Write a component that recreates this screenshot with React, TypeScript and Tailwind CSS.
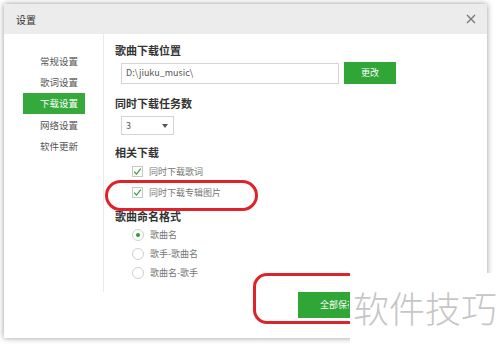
import React from "react";

const F = { fontFamily: '"Noto Sans CJK SC", "Noto Sans", sans-serif' };

function Check({ label }: { label: string }) {
  return (
    <div className="flex items-center h-[21px] pl-[17px]">
      <div className="w-[11px] h-[11px] border border-[#c8c8c8] bg-white flex items-center justify-center">
        <svg width="9" height="9" viewBox="0 0 9 9">
          <path d="M1.2 4.6 L3.5 7 L7.8 1.6" fill="none" stroke="#3a9e3f" strokeWidth="1.2" />
        </svg>
      </div>
      <span className="ml-[6px] text-[9px] text-[#777]">{label}</span>
    </div>
  );
}

function Radio({ label, on }: { label: string; on?: boolean }) {
  return (
    <div className="flex items-center h-[19px] pl-[17px]">
      <div className="w-[12px] h-[12px] rounded-full border border-[#d0d0d0] bg-white flex items-center justify-center">
        {on && <div className="w-[4px] h-[4px] rounded-full bg-[#2f9c35]" />}
      </div>
      <span className="ml-[6px] text-[9px] text-[#777]">{label}</span>
    </div>
  );
}

export default function App() {
  const menu = ["常规设置", "歌词设置", "下载设置", "网络设置", "软件更新"];
  return (
    <div className="relative w-[500px] h-[348px] bg-white overflow-hidden" style={F}>
      <div className="absolute left-[4px] top-[4px] w-[483px] h-[334px] bg-white shadow-[0_0_6px_rgba(0,0,0,0.4)] flex flex-col">
        <div className="h-[30px] bg-[#ececec] flex items-center justify-between pl-[12px] pr-[11px]">
          <span className="text-[10px] text-[#333]">设置</span>
          <svg width="10" height="10" viewBox="0 0 10 10">
            <path d="M1 1 L9 9 M9 1 L1 9" stroke="#777" strokeWidth="1.3" />
          </svg>
        </div>
        <div className="flex h-[258px]">
          <div className="w-[100px] border-r border-[#eaeaea] pt-[17px] flex flex-col">
            {menu.map((m, i) => (
              <div
                key={m}
                className={
                  "ml-[19px] w-[62px] h-[21px] flex items-center pl-[17px] text-[9.5px] " +
                  (i === 2 ? "bg-[#36a93c] text-white" : "text-[#555]") +
                  (i === 3 ? " mt-[1px]" : "")
                }
              >
                {m}
              </div>
            ))}
          </div>
          <div className="flex-1 pl-[11px] pt-[8px] flex flex-col">
            <div className="h-[16px] flex items-center text-[11px] font-bold text-[#333]">歌曲下载位置</div>
            <div className="flex items-center h-[22px] mt-[4px] pl-[6px]">
              <div className="w-[218px] h-[21px] border border-[#d4d4d4] flex items-center pl-[4px] text-[9px] text-[#555]">
                D:\jiuku_music\
              </div>
              <div className="ml-[5px] w-[52px] h-[22px] bg-[#2fa635] text-white text-[9px] flex items-center justify-center">
                更改
              </div>
            </div>
            <div className="h-[16px] mt-[11px] flex items-center text-[11px] font-bold text-[#333]">同时下载任务数</div>
            <div className="mt-[5px] ml-[6px] w-[53px] h-[19px] border border-[#d4d4d4] flex items-center justify-between pl-[4px] pr-[5px] text-[9px] text-[#555]">
              <span>3</span>
              <svg width="6" height="4" viewBox="0 0 6 4">
                <path d="M0 0 L6 0 L3 4 Z" fill="#555" />
              </svg>
            </div>
            <div className="h-[16px] mt-[9px] flex items-center text-[11px] font-bold text-[#333]">相关下载</div>
            <div className="mt-[1px]">
              <Check label="同时下载歌词" />
              <Check label="同时下载专辑图片" />
            </div>
            <div className="h-[16px] mt-[5px] flex items-center text-[11px] font-bold text-[#333]">歌曲命名格式</div>
            <div className="mt-[1px]">
              <Radio label="歌曲名" on />
              <Radio label="歌手-歌曲名" />
              <Radio label="歌曲名-歌手" />
            </div>
          </div>
        </div>
        <div className="flex pl-[294px]">
          <div className="w-[80px] h-[26px] bg-[#2fa635] text-white text-[9px] flex items-center pl-[22px]">
            <span className="w-[29px] overflow-hidden whitespace-nowrap">全部保存</span>
          </div>
        </div>
      </div>

      <div className="absolute left-[105px] top-[180px] w-[153px] h-[31px] border-[3px] border-[#e0232b] rounded-[18px]" />
      <div className="absolute left-[253px] top-[273px] w-[130px] h-[51px] border-[3px] border-[#e0232b] rounded-[14px]" />

      <div className="absolute left-[350px] top-[273px] w-[150px] h-[75px] bg-white flex items-start pt-[12px] pl-[3px]">
        <span className="text-[36px] leading-[44px] text-[#c6c6c6] font-light whitespace-nowrap">软件技巧</span>
      </div>
    </div>
  );
}
